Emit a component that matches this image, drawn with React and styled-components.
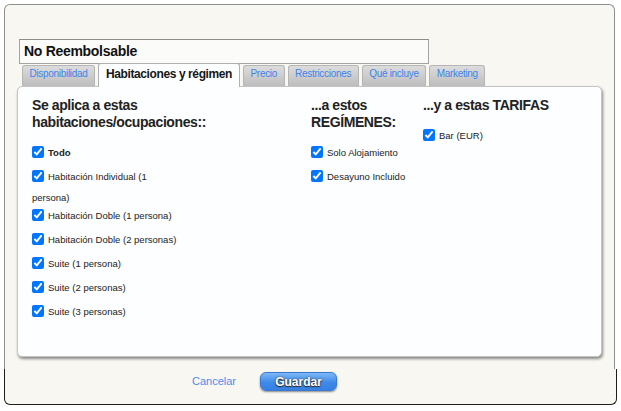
import React from "react";
import styled, { createGlobalStyle } from "styled-components";

const Global = createGlobalStyle`
    body{
        margin:0;
        background:#ffffff;
        font-family:"Liberation Sans", Arial, sans-serif;
    }
`;

const Page = styled.div`
    padding:4px 5px 6px 4px;
    width:611px;
`;

const Top = styled.div`
    background:#f8f7f2;
    border:1px solid #8e8e8e;
    border-bottom:none;
    border-radius:6px 6px 0 0;
    padding:34px 12px 10px 12px;
    height:320px;
`;

const TitleBox = styled.div`
    margin-left:2px;
    width:404px;
    height:23px;
    border:1px solid #a3a3a3;
    border-top-color:#8c8c8c;
    background:#fbfbfa;
    font-size:14px;
    font-weight:bold;
    letter-spacing:-0.3px;
    color:#111;
    line-height:23px;
    padding-left:4px;
`;

const TabBar = styled.div`
    display:flex;
    align-items:flex-end;
    gap:3px;
    padding-left:5px;
    height:22px;
    position:relative;
    z-index:2;
`;

const Tab = styled.div`
    height:${p => (p.$active ? "23px" : "20px")};
    margin-bottom:${p => (p.$active ? "-1px" : "0")};
    padding:0 ${p => (p.$active ? "7px" : "6.5px")};
    border:1px solid ${p => (p.$active ? "#b0b0b0" : "#b5b5b5")};
    border-bottom:none;
    border-radius:3px 3px 0 0;
    background:${p => (p.$active ? "#fdfeff" : "linear-gradient(#dcdcdc, #bdbdbd)")};
    color:${p => (p.$active ? "#161616" : "#3d84ee")};
    font-size:${p => (p.$active ? "12px" : "10px")};
    font-weight:${p => (p.$active ? "bold" : "normal")};
    letter-spacing:${p => (p.$active ? "-0.4px" : "-0.3px")};
    line-height:${p => (p.$active ? "20px" : "16px")};
    white-space:nowrap;
`;

const Panel = styled.div`
    position:relative;
    z-index:1;
    width:569px;
    height:269px;
    background:#fdfeff;
    border:1px solid #c4c4c4;
    border-radius:5px;
    box-shadow:1px 2px 3px rgba(0,0,0,0.45);
    display:grid;
    grid-template-columns:265px 98px 1fr;
    column-gap:14px;
    padding:0 0 0 14px;
`;

const Column = styled.div`
    padding-top:10px;
`;

const Heading = styled.h3`
    margin:0 0 14px 0;
    font-size:14px;
    line-height:17px;
    font-weight:bold;
    letter-spacing:-0.4px;
    color:#222;
`;

const List = styled.div`
    width:${p => p.$width || "auto"};
`;

const Item = styled.label`
    display:block;
    font-size:9.5px;
    line-height:15px;
    margin-bottom:3px;
    color:#222;
    font-weight:${p => (p.$bold ? "bold" : "normal")};
`;

const Box = styled.input`
    width:12px;
    height:12px;
    margin:0 4px 8px 0;
    vertical-align:-2px;
`;

const Footer = styled.div`
    background:#f8f7f2;
    border:1px solid #1e1e1e;
    border-top:none;
    border-radius:0 0 6px 6px;
    height:32px;
    margin-right:-2px;
    display:flex;
    align-items:flex-start;
    padding:3px 0 0 187px;
    gap:24px;
`;

const Cancel = styled.span`
    color:#4a8cf0;
    font-size:11px;
    line-height:19px;
`;

const SaveButton = styled.button`
    width:77px;
    height:19px;
    border:1px solid #3b78d0;
    border-radius:6px;
    background:linear-gradient(#7cb8f7, #3f8ae8 55%, #3580e2);
    box-shadow:0 1px 2px rgba(0,0,0,0.45);
    color:#fff;
    font-family:"Liberation Sans", Arial, sans-serif;
    font-size:12px;
    font-weight:bold;
    padding:0;
    text-shadow:0 0 2px #333, 0 1px 1px #222;
`;

const Check = ({ children, bold }) => (
    <Item $bold={bold}>
        <Box type="checkbox" defaultChecked />
        {children}
    </Item>
);

const rooms = [
    "Habitación Individual (1 persona)",
    "Habitación Doble (1 persona)",
    "Habitación Doble (2 personas)",
    "Suite (1 persona)",
    "Suite (2 personas)",
    "Suite (3 personas)",
];

const tabs = ["Disponibilidad", "Habitaciones y régimen", "Precio", "Restricciones", "Qué incluye", "Marketing"];

const App = () => {
    return (
        <Page>
            <Global />
            <Top>
                <TitleBox>No Reembolsable</TitleBox>
                <TabBar>
                    {tabs.map(t => (
                        <Tab key={t} $active={t === "Habitaciones y régimen"}>{t}</Tab>
                    ))}
                </TabBar>
                <Panel>
                    <Column>
                        <Heading>Se aplica a estas habitaciones/ocupaciones::</Heading>
                        <List $width="152px">
                            <Check bold>Todo</Check>
                            {rooms.map(r => <Check key={r}>{r}</Check>)}
                        </List>
                    </Column>
                    <Column>
                        <Heading>...a estos REGÍMENES:</Heading>
                        <List>
                            <Check>Solo Alojamiento</Check>
                            <Check>Desayuno Incluido</Check>
                        </List>
                    </Column>
                    <Column>
                        <Heading>...y a estas TARIFAS</Heading>
                        <List>
                            <Check>Bar (EUR)</Check>
                        </List>
                    </Column>
                </Panel>
            </Top>
            <Footer>
                <Cancel>Cancelar</Cancel>
                <SaveButton>Guardar</SaveButton>
            </Footer>
        </Page>
    );
};

export default App;
